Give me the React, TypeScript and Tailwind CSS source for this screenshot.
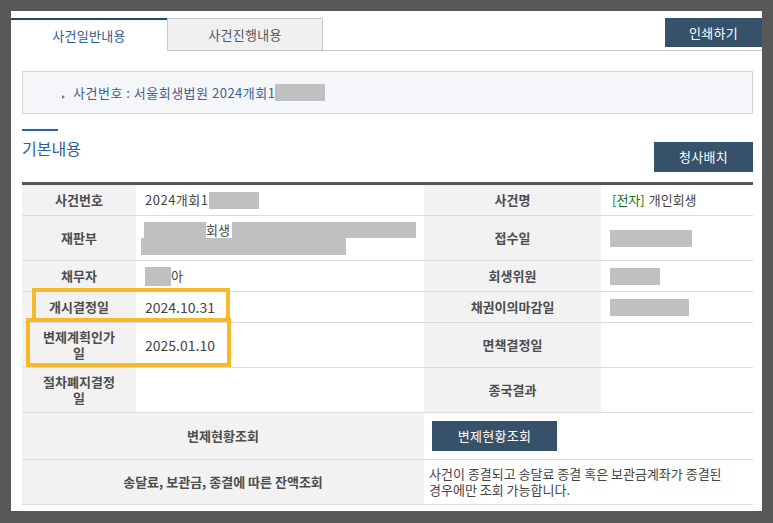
const Label = ({ children, className = '' }: { children: React.ReactNode; className?: string }) => (
  <div className={`bg-[#f2f2f2] flex flex-col items-center justify-center text-center font-bold text-[13px] leading-[16px] text-[#4d4d4d] ${className}`}>
    {children}
  </div>
);

const Value = ({ children, className = '' }: { children?: React.ReactNode; className?: string }) => (
  <div className={`flex items-center pl-[9px] text-[13px] text-[#444] ${className}`}>{children}</div>
);

const Row = ({ children, className = '' }: { children: React.ReactNode; className?: string }) => (
  <div className={`grid grid-cols-[114px_288px_177px_152px] border-b border-[#dcdcdc] ${className}`}>{children}</div>
);

const CaseDetail = () => {
  return (
    <div className="relative w-[773px] h-[523px] bg-[#585858] pt-[11px] pl-[11px] font-['Noto_Sans_CJK_KR',sans-serif]">
      <div className="w-[751px] h-[500px] bg-white pt-[7px] flex flex-col">
        {/* tabs */}
        <div className="flex h-[33px]">
          <div className="w-[156px] border-t-2 border-[#22486b] flex items-center justify-center text-[13px] tracking-[0.3px] text-[#2e5a90]">
            사건일반내용
          </div>
          <div className="w-[156px] border border-[#c8c8c8] bg-[#f0f0f0] flex items-center justify-center text-[13px] tracking-[0.3px] text-[#555]">
            사건진행내용
          </div>
          <div className="flex-1 border-b border-[#c8c8c8] flex justify-end items-start">
            <button className="w-[97px] h-[29px] bg-[#36526a] text-white text-[13px] tracking-[0.3px]">인쇄하기</button>
          </div>
        </div>

        <div className="pl-[11px] pr-[9px]">
          {/* case number box */}
          <div className="mt-[20px] h-[43px] border border-[#d0d4dc] bg-[#f5f6fa] flex items-center pl-[39px] text-[13px] tracking-[0.5px] text-[#3c5f92]">
            <span className="w-0 h-0 border-y-[2.5px] border-y-transparent border-l-[3px] border-l-[#777] translate-y-[4px]" />
            <span className="ml-[8px]">사건번호 : 서울회생법원 2024개회1</span>
            <span className="inline-block w-[50px] h-[17px] bg-[#c0c0c0]" />
          </div>

          {/* heading */}
          <div className="mt-[15px] flex justify-between items-start">
            <div>
              <div className="w-[36px] h-[2px] bg-[#2a64a6]" />
              <h2 className="mt-[6px] text-[16px] leading-[22px] text-[#2b5f96]">기본내용</h2>
            </div>
            <button className="mt-[13px] w-[99px] h-[30px] bg-[#36526a] text-white text-[13px] tracking-[0.3px]">청사배치</button>
          </div>

          {/* table */}
          <div className="mt-[10px] border-t-[3px] border-[#555]">
            <Row className="h-[31px]">
              <Label>사건번호</Label>
              <Value className="tracking-[0.5px]">
                2024개회1
                <span className="inline-block w-[50px] h-[17px] bg-[#c0c0c0]" />
              </Value>
              <Label>사건명</Label>
              <Value className="pl-[11px]">
                <span className="text-[#117711]">[전자]</span>
                <span className="ml-[4px]">개인회생</span>
              </Value>
            </Row>
            <Row className="h-[45px]">
              <Label>재판부</Label>
              <div className="flex flex-col justify-center pl-[5px] text-[13px] text-[#444]">
                <div className="flex items-center h-[16px] pl-[3px]">
                  <span className="inline-block w-[62px] h-[16px] bg-[#c0c0c0]" />
                  <span className="w-[26px] leading-[16px]">회생</span>
                  <span className="inline-block w-[184px] h-[16px] bg-[#c0c0c0]" />
                </div>
                <span className="block w-[205px] h-[17px] bg-[#c0c0c0]" />
              </div>
              <Label>접수일</Label>
              <Value className="pl-[7px]">
                <span className="inline-block w-[82px] h-[17px] bg-[#c0c0c0]" />
              </Value>
            </Row>
            <Row className="h-[31px]">
              <Label>채무자</Label>
              <Value className="pl-[5px]">
                <span className="inline-block w-[26px] h-[19px] bg-[#c0c0c0]" />
                아
              </Value>
              <Label>회생위원</Label>
              <Value className="pl-[8px]">
                <span className="inline-block w-[50px] h-[17px] bg-[#c0c0c0]" />
              </Value>
            </Row>
            <Row className="h-[31px]">
              <Label>개시결정일</Label>
              <Value className="text-[14px]">2024.10.31</Value>
              <Label>채권이의마감일</Label>
              <Value className="pl-[9px]">
                <span className="inline-block w-[79px] h-[17px] bg-[#c0c0c0]" />
              </Value>
            </Row>
            <Row className="h-[45px]">
              <Label>
                <span className="block">변제계획인가</span>
                <span className="block">일</span>
              </Label>
              <Value className="text-[14px]">2025.01.10</Value>
              <Label>면책결정일</Label>
              <Value />
            </Row>
            <Row className="h-[45px]">
              <Label>
                <span className="block">절차폐지결정</span>
                <span className="block">일</span>
              </Label>
              <Value />
              <Label>종국결과</Label>
              <Value />
            </Row>
            <Row className="h-[47px]">
              <Label className="col-span-2">변제현황조회</Label>
              <div className="col-span-2 flex items-center pl-[8px]">
                <button className="w-[125px] h-[30px] bg-[#36526a] text-white text-[13px] tracking-[0.3px]">변제현황조회</button>
              </div>
            </Row>
            <Row className="h-[45px]">
              <Label className="col-span-2">송달료, 보관금, 종결에 따른 잔액조회</Label>
              <div className="col-span-2 flex flex-col justify-center pl-[5px] text-[13px] leading-[16px] text-[#444]">
                <span className="block">사건이 종결되고 송달료 종결 혹은 보관금계좌가 종결된</span>
                <span className="block">경우에만 조회 가능합니다.</span>
              </div>
            </Row>
          </div>
        </div>
      </div>

      {/* highlight boxes */}
      <div className="absolute left-[32px] top-[288px] w-[198px] h-[34px] border-4 border-[#f7b928]" />
      <div className="absolute left-[26px] top-[318px] w-[205px] h-[49px] border-4 border-[#f7b928]" />
    </div>
  );
};

export default function App() {
  return <CaseDetail />;
}
